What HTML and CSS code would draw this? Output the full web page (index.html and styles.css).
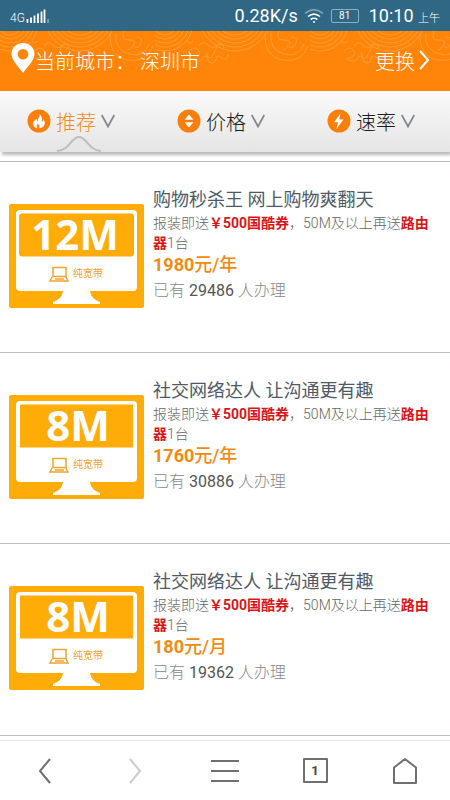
FILE: index.html
```html
<!DOCTYPE html>
<html lang="zh-CN">
<head>
<meta charset="utf-8">
<meta name="viewport" content="width=device-width, initial-scale=1">
<title>宽带办理</title>
<link rel="stylesheet" href="styles.css">
</head>
<body>
<div class="app">
  <div class="status">
    <span class="network">4G</span>
    <svg class="signal" width="24" height="16" viewBox="0 0 24 16"><path d="M1.500 11v4M5 9.500v5.500M8.500 7.500v7.500M12 5.500v9.500M15.500 3.500v11.500M18.500 1.500v13.500" stroke="#fff" stroke-width="1.800"/><path d="M22 11v4" stroke="#b9cdd9"/></svg>
    <span class="speed">0.28K/s</span>
    <svg class="wifi" width="20" height="16" viewBox="0 0 20 16" fill="none" stroke="#fff" stroke-width="1.600"><path d="M1 5.500Q10-2 19 5.500" stroke="#7fa5ba"/><path d="M4 8.500q6-4.800 12 0M6.700 11.500q3.300-2.600 6.600 0"/><circle cx="10" cy="14" r="1" fill="#fff" stroke="none"/></svg>
    <span class="battery">81</span>
    <span class="clock">10:10 <small>上午</small></span>
  </div>

  <header class="city-bar">
    <svg class="waves" height="44" width="100%" fill="none" stroke="#ffb45c">
      <defs>
        <pattern id="wave" width="155" height="44" patternUnits="userSpaceOnUse">
          <g><circle cx="10" cy="-8" r="12"/><circle cx="10" cy="-8" r="16"/><circle cx="10" cy="-8" r="20"/><circle cx="10" cy="-8" r="24"/><circle cx="10" cy="-8" r="28"/></g>
          <g><circle cx="80" cy="-16" r="20"/><circle cx="80" cy="-16" r="24"/><circle cx="80" cy="-16" r="28"/><circle cx="80" cy="-16" r="32"/><circle cx="80" cy="-16" r="36"/></g>
          <path d="M110 2q-1 24 18 27t25-14M116 2q-2 17 13 21t20-10M124 0q-4 9 5 9t4 6-5 3M136 6q7 0 5 6t-7 4"/>
          <path d="M34 20q7-6 10 0t-8 8q9 5 12-1t6 4q6 3 7-3t7 0q6 1 5-5M44 15q4-6 9-1t8 1-2 7-8-1M38 10q-4 4-6 0M62 14q6-2 7 3"/>
        </pattern>
      </defs>
      <rect width="100%" height="44" fill="url(#wave)" stroke="none"/>
    </svg>
    <svg class="pin" width="24" height="32" viewBox="0 0 24 32"><path fill="#fff" fill-rule="evenodd" d="M12 1C5.500 1 .5 5.800.5 12c0 6.300 6 11.500 11.500 19C17.500 23.500 23.500 18.300 23.500 12 23.500 5.800 18.500 1 12 1Zm0 6a5.300 5.300 0 1 1 0 10.600A5.300 5.300 0 0 1 12 7Z"/></svg>
    <span class="city-label">当前城市：</span>
    <span class="city">深圳市</span>
    <a class="change" href="#">更换<svg width="12" height="22" viewBox="0 0 12 22" fill="none" stroke="#fff" stroke-width="2"><path d="M2 2l8 9-8 9"/></svg></a>
  </header>

  <nav class="tabs">
    <button class="tab active" type="button">
      <svg width="24" height="24" viewBox="0 0 24 24"><circle cx="12" cy="12" r="11.500" fill="#f97f0a"/><path fill="#fff" d="M12.500 5c.8 3-2 4.200-1.700 7.200-1-.5-1.300-1.500-1.100-2.700C7.500 11.500 5 14 6.500 16.800 7.300 18.300 9 19 10.500 19.200c-1.700-1.700-.7-3.300.8-4.700 0 1.800 1.700 2.500.8 4.700 4.500-.4 6.700-3.500 5.300-7.200l-1.200-2.500c.1 1.500-.2 2.500-1.200 3.300.3-3-.2-6-2.500-7.800Z"/></svg>
      <span>推荐</span>
      <svg class="caret" width="14" height="14" viewBox="0 0 14 14" fill="none" stroke="#85898c" stroke-width="1.800"><path d="M.7 1 7 12.500 13.300 1"/></svg>
      <svg class="notch" width="46" height="17" viewBox="0 0 46 17"><path d="M1 16C14 15 15 2 23 2s9 13 22 14" fill="#e6e6e6" stroke="#bdbdbd" stroke-width="2"/></svg>
    </button>
    <button class="tab" type="button">
      <svg width="24" height="24" viewBox="0 0 24 24"><circle cx="12" cy="12" r="11.500" fill="#f97f0a"/><path fill="#fff" d="m12 5.500 4.500 5.200h-9ZM12 18.500l-4.500-5.200h9Z"/></svg>
      <span>价格</span>
      <svg class="caret" width="14" height="14" viewBox="0 0 14 14" fill="none" stroke="#85898c" stroke-width="1.800"><path d="M.7 1 7 12.500 13.300 1"/></svg>
    </button>
    <button class="tab" type="button">
      <svg width="24" height="24" viewBox="0 0 24 24"><circle cx="12" cy="12" r="11.500" fill="#f97f0a"/><path fill="#fff" d="M13.500 4.500 7 13.300h4L9.500 20l7-9.500h-4.300Z"/></svg>
      <span>速率</span>
      <svg class="caret" width="14" height="14" viewBox="0 0 14 14" fill="none" stroke="#85898c" stroke-width="1.800"><path d="M.7 1 7 12.500 13.300 1"/></svg>
    </button>
  </nav>

  <main class="plans">
    <article class="plan">
      <svg class="monitor" width="135" height="104" viewBox="0 0 135 104"><rect width="135" height="104" rx="2" fill="#ffab08"/><path fill="#fff" d="M11 6h113q4 0 4 4v73q0 4-4 4H81q1 8 10 11v2H44v-2q9-3 10-11H11q-4 0-4-4V10q0-4 4-4Z"/><rect x="10" y="9.500" width="115" height="43" rx="3" fill="#ffab08"/><text class="rate" x="66" y="46" text-anchor="middle">12M</text><path d="M44 63.500h13v9H44ZM43 73l-2 4h18l-2-4M46 75h9" fill="none" stroke="#f0a52c" stroke-width="1.500"/><text class="kind" x="64" y="73">纯宽带</text></svg>
      <div class="info">
        <h2>购物秒杀王 网上购物爽翻天</h2>
        <p class="offer">报装即送<b>￥500国酷券</b>，50M及以上再送<b>路由器</b>1台</p>
        <p class="price">1980<span>元/年</span></p>
        <p class="count">已有 <span>29486</span> 人办理</p>
      </div>
    </article>
    <article class="plan">
      <svg class="monitor" width="135" height="104" viewBox="0 0 135 104"><rect width="135" height="104" rx="2" fill="#ffab08"/><path fill="#fff" d="M11 6h113q4 0 4 4v73q0 4-4 4H81q1 8 10 11v2H44v-2q9-3 10-11H11q-4 0-4-4V10q0-4 4-4Z"/><rect x="11" y="9.500" width="113" height="43" fill="#ffab08"/><text class="rate" x="69" y="46" text-anchor="middle">8M</text><path d="M44 63.500h13v9H44ZM43 73l-2 4h18l-2-4M46 75h9" fill="none" stroke="#f0a52c" stroke-width="1.500"/><text class="kind" x="64" y="73">纯宽带</text></svg>
      <div class="info">
        <h2>社交网络达人 让沟通更有趣</h2>
        <p class="offer">报装即送<b>￥500国酷券</b>，50M及以上再送<b>路由器</b>1台</p>
        <p class="price">1760<span>元/年</span></p>
        <p class="count">已有 <span>30886</span> 人办理</p>
      </div>
    </article>
    <article class="plan">
      <svg class="monitor" width="135" height="104" viewBox="0 0 135 104"><rect width="135" height="104" rx="2" fill="#ffab08"/><path fill="#fff" d="M11 6h113q4 0 4 4v73q0 4-4 4H81q1 8 10 11v2H44v-2q9-3 10-11H11q-4 0-4-4V10q0-4 4-4Z"/><rect x="11" y="9.500" width="113" height="43" fill="#ffab08"/><text class="rate" x="69" y="46" text-anchor="middle">8M</text><path d="M44 63.500h13v9H44ZM43 73l-2 4h18l-2-4M46 75h9" fill="none" stroke="#f0a52c" stroke-width="1.500"/><text class="kind" x="64" y="73">纯宽带</text></svg>
      <div class="info">
        <h2>社交网络达人 让沟通更有趣</h2>
        <p class="offer">报装即送<b>￥500国酷券</b>，50M及以上再送<b>路由器</b>1台</p>
        <p class="price">180<span>元/月</span></p>
        <p class="count">已有 <span>19362</span> 人办理</p>
      </div>
    </article>
  </main>

  <nav class="toolbar">
    <button type="button" aria-label="后退"><svg width="30" height="30" viewBox="0 0 30 30"><path d="M20 3 10 15l10 12"/></svg></button>
    <button type="button" aria-label="前进" disabled><svg width="30" height="30" viewBox="0 0 30 30"><path d="m10 3 10 12-10 12"/></svg></button>
    <button type="button" aria-label="菜单"><svg width="30" height="30" viewBox="0 0 30 30"><path d="M1 5h28M1 15h28M1 25h28"/></svg></button>
    <button type="button" aria-label="窗口"><span class="windows">1</span></button>
    <button type="button" aria-label="主页"><svg width="30" height="30" viewBox="0 0 30 30"><path d="M15 3 4 11.500V27h22V11.500Z" stroke-linejoin="round"/></svg></button>
  </nav>
</div>
</body>
</html>
```
FILE: styles.css
```css
* { box-sizing: border-box; }
body {
  margin: 0;
  background: #fff;
  color: #666;
  font-family: Roboto, "Noto Sans CJK SC", sans-serif;
  font-weight: 300;
}
h2, p { margin: 0; font-weight: 300; }
svg { display: block; flex: none; }
button {
  border: 0;
  padding: 0;
  background: none;
  color: inherit;
  font: inherit;
}
.app { display: flex; flex-direction: column; min-height: 100vh; }

.status {
  display: flex;
  align-items: center;
  height: 31px;
  padding: 0 10px;
  background: #2f6785;
  color: #fff;
  font-weight: 400;
}
.network { font-size: 12px; padding-top: 4px; font-weight: 300; }
.signal { margin-left: 1px; }
.speed { margin-left: auto; font-size: 18px; }
.wifi { margin-left: 6px; }
.battery {
  margin: 0 10px 0 7px;
  width: 28px;
  border: 1px solid #8fb0c2;
  border-radius: 2px;
  font-size: 10px;
  line-height: 12px;
  text-align: center;
}
.clock { font-size: 18px; white-space: nowrap; }
.clock small { font-size: 11px; font-weight: 300; }

.city-bar {
  position: relative;
  display: flex;
  align-items: center;
  height: 60px;
  padding: 0 20px 2px 11px;
  background: #ff850a;
  color: #fff;
  font-size: 20px;
}
.waves { position: absolute; top: 0; left: 0; opacity: 0.5; }
.pin { position: relative; margin-bottom: 4px; }
.city-label, .city, .change { position: relative; }
.city { margin-left: 5px; }
.change {
  display: flex;
  align-items: center;
  gap: 3px;
  margin-left: auto;
  color: inherit;
  text-decoration: none;
}

.tabs {
  display: flex;
  height: 61px;
  background: linear-gradient(#fafafa, #e5e5e5);
  box-shadow: 2px 3px 3px #bbb;
}
.tab {
  position: relative;
  display: flex;
  flex: 1;
  align-items: center;
  justify-content: center;
  gap: 5px;
  padding: 0 8px 1px 0;
  color: #1c1c1c;
  font-size: 20px;
}
.tab.active { color: #ef8c1e; }
.notch {
  position: absolute;
  bottom: 0;
  left: 50%;
  margin-left: 4px;
  transform: translateX(-50%);
}

.plans { flex: 1; margin-top: 9px; border-bottom: 1px solid #b9bec2; }
.plan {
  display: flex;
  align-items: flex-start;
  gap: 9px;
  min-height: 191px;
  padding: 26px 9px;
  border-top: 1px solid #b9bec2;
}
.monitor { margin-top: 16px; }
.rate {
  fill: #fff;
  font: 700 42px "Open Sans", sans-serif;
}
.kind { fill: #f0a52c; font-size: 10px; font-weight: 400; }
.info { flex: 1; }
.info h2 {
  margin-bottom: 1px;
  color: #4d5967;
  font-size: 18px;
  font-weight: 400;
  line-height: 24px;
}
.offer { font-size: 14px; line-height: 20px; }
.offer b { color: #d9151b; font-weight: 700; }
.price {
  margin-bottom: 2px;
  color: #f28a12;
  font-size: 18px;
  font-weight: 700;
  line-height: 24px;
}
.price span { font-weight: 500; }
.count { color: #888; font-size: 16px; line-height: 24px; }
.count span { color: #555; font-weight: 400; }

.toolbar {
  display: flex;
  height: 60px;
  margin-top: 4px;
  border-top: 1px solid #e6e6e6;
}
.toolbar button {
  display: flex;
  flex: 1;
  align-items: center;
  justify-content: center;
}
.toolbar svg { fill: none; stroke: #707070; stroke-width: 2; }
.toolbar button:disabled svg { stroke: #ccc; }
.windows {
  width: 25px;
  border: 2px solid #707070;
  border-radius: 1px;
  color: #444;
  font-size: 13px;
  font-weight: 700;
  line-height: 21px;
}
```
